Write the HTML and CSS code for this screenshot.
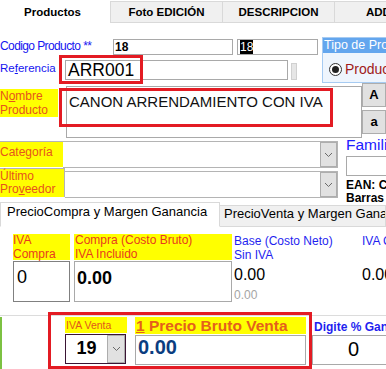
FILE: index.html
```html
<!DOCTYPE html>
<html lang="es">
<head>
<meta charset="utf-8">
<link rel="stylesheet" href="styles.css">
</head>
<body>
<div class="page">
  <div class="tabs">
    <div class="tab active">Productos</div>
    <div class="tab">Foto EDICIÓN</div>
    <div class="tab">DESCRIPCION</div>
    <div class="tab last">ADD</div>
  </div>

  <div class="row-ab">
    <div class="ab-left">
      <div class="row-a">
        <div class="lbl-blue lbl-codigo">Codi<u>g</u>o Producto **</div>
        <div class="inp inp-cod">18</div>
        <div class="inp inp-cod2"><span class="sel">18</span></div>
      </div>
      <div class="row-b">
        <div class="lbl-blue lbl-ref">Re<u>f</u>erencia</div>
        <div class="inp inp-ref">ARR001</div>
        <div class="mini-bar"></div>
      </div>
    </div>
    <div class="group">
      <div class="group-head">Tipo de Producto</div>
      <div class="group-body">
        <span class="radio"><span class="dot"></span></span>
        <span class="radio-text">Producto</span>
      </div>
    </div>
  </div>

  <div class="row-c">
    <div class="ylbl lbl-nombre">N<u>o</u>mbre<br>Producto</div>
    <div class="inp textarea">CANON ARRENDAMIENTO CON IVA</div>
    <div class="btns">
      <div class="btn">A</div>
      <div class="btn">a</div>
    </div>
  </div>

  <div class="row-de">
    <div class="de-left">
      <div class="row-d">
        <div class="ylbl lbl-cat">Cate<u>g</u>oría</div>
        <div class="combo combo-cat">
          <div class="drop"><svg width="9" height="6" viewBox="0 0 9 6"><polyline points="1,1 4.5,4.5 8,1" fill="none" stroke="#6a6a6a" stroke-width="1"/></svg></div>
        </div>
      </div>
      <div class="row-e">
        <div class="ylbl lbl-prov">Último<br>Pro<u>v</u>eedor</div>
        <div class="combo combo-prov">
          <div class="drop"><svg width="9" height="6" viewBox="0 0 9 6"><polyline points="1,1 4.5,4.5 8,1" fill="none" stroke="#6a6a6a" stroke-width="1"/></svg></div>
        </div>
      </div>
    </div>
    <div class="de-right">
      <div class="familia">Familia</div>
      <div class="inp inp-fam"></div>
      <div class="ean">EAN: Codigo<br>Barras</div>
    </div>
  </div>

  <div class="tabs2">
    <div class="tab2 active">PrecioCompra y Margen Ganancia</div>
    <div class="tab2">PrecioVenta y Margen Ganancia</div>
  </div>

  <div class="panel">
    <div class="col col1">
      <div class="ylbl lbl-red lbl-ivac">IVA<br>Compra</div>
      <div class="inp box-ivac">0</div>
    </div>
    <div class="col col2">
      <div class="ylbl lbl-red lbl-compra">Compra (Costo Bruto)<br>IVA Incluido</div>
      <div class="inp box-compra">0.00</div>
    </div>
    <div class="col col3">
      <div class="blue-txt">Base (Costo Neto)<br>Sin IVA</div>
      <div class="val">0.00</div>
      <div class="val-gray">0.00</div>
    </div>
    <div class="col col4">
      <div class="blue-txt">IVA Compra<br>&nbsp;</div>
      <div class="val">0.00</div>
    </div>
  </div>

  <div class="bottom">
    <div class="bcol bcol-iva">
      <div class="ylbl lbl-ivav">IVA Venta</div>
      <div class="combo-iva">
        <div class="iva-val">19</div>
        <div class="drop drop-iva"><svg width="9" height="6" viewBox="0 0 9 6"><polyline points="1,1 4.5,4.5 8,1" fill="none" stroke="#6a6a6a" stroke-width="1"/></svg></div>
      </div>
    </div>
    <div class="bcol bcol-precio">
      <div class="ylbl lbl-precio"><u>1</u> Precio Bruto Venta</div>
      <div class="inp box-precio">0.00</div>
    </div>
    <div class="bcol bcol-dig">
      <div class="lbl-dig">Digite % Ganancia</div>
      <div class="inp box-dig">0</div>
    </div>
  </div>

  <div class="hl hl-ref"></div>
  <div class="hl hl-nombre"></div>
  <div class="hl hl-bottom"></div>
</div>
</body>
</html>
```

FILE: styles.css
```css
* { box-sizing: border-box; }
html, body { margin: 0; padding: 0; background: #fff; }
.page {
  position: relative;
  width: 386px;
  height: 369px;
  overflow: hidden;
  font-family: "Liberation Sans", Arial, sans-serif;
  font-size: 12px;
  color: #000;
  white-space: nowrap;
}
u { text-decoration: underline; text-underline-offset: 1px; }

/* top tabs */
.tabs { display: flex; height: 23px; }
.tab {
  flex: none;
  width: 112px;
  height: 22px;
  margin-top: 1px;
  padding-top: 1px;
  border: 1px solid #d9d9d9;
  border-right: none;
  background: #f0f0f0;
  font-weight: bold;
  font-size: 11.5px;
  line-height: 19px;
  text-align: center;
  overflow: hidden;
}
.tab.active {
  width: 110px;
  margin-top: 0;
  padding: 0 6px 0 0;
  border-color: transparent;
  background: #fff;
  line-height: 22px;
}
.tab.last { text-align: left; padding-left: 31px; }

/* rows A & B */
.row-ab { display: flex; height: 47px; margin-top: 14px; }
.ab-left { width: 322px; flex: none; }
.row-a { display: flex; height: 21px; }
.lbl-blue { color: #1515f0; line-height: 14px; }
.lbl-codigo { width: 113px; padding-top: 2px; font-size: 12px; letter-spacing: -0.6px; }
.inp { border: 1px solid #a9a9a9; background: #fff; overflow: hidden; }
.inp-cod {
  width: 120px; height: 16px; margin-top: 2px;
  font-weight: bold; font-size: 12px; line-height: 14px; padding-left: 1px;
}
.inp-cod2 {
  width: 81px; height: 16px; margin-top: 2px; margin-left: 4px;
  font-size: 12px; line-height: 14px; padding-left: 2px;
}
.sel { background: #000; color: #fff; }
.row-b { display: flex; height: 26px; }
.lbl-ref { width: 65px; padding-top: 3px; font-size: 11.5px; }
.inp-ref {
  width: 223px; height: 20px; margin-top: 2px;
  font-size: 17.5px; line-height: 19px; padding-left: 2px;
}
.mini-bar {
  width: 6px; height: 17px; margin-top: 5px; margin-left: 3px;
  background: #e6e6e6; border: 1px solid #d0d0d0;
}
.group {
  width: 64px; height: 46px; flex: none;
  border: 1px solid #a6cbf2; border-right: none;
  background: #eef5fd;
  overflow: hidden;
}
.group-head {
  height: 15px; background: #63a6ee; color: #fff;
  font-size: 12.5px; line-height: 15px; padding-left: 1px;
}
.group-body { display: flex; align-items: center; padding: 8px 0 0 6px; }
.radio {
  width: 13px; height: 13px; border-radius: 50%;
  border: 1px solid #333; background: #fff;
  display: flex; align-items: center; justify-content: center; flex: none;
}
.dot { width: 7px; height: 7px; border-radius: 50%; background: #222; }
.radio-text { color: #a01a1a; font-size: 14px; margin-left: 3px; line-height: 16px; }

/* row C */
.row-c { display: flex; height: 56px; }
.ylbl { background: #ffff00; color: #e6541c; flex: none; }
.lbl-nombre { width: 58px; height: 28px; margin-top: 5px; line-height: 14px; }
.textarea {
  width: 300px; height: 52px; margin-left: 8px; margin-top: 2px;
  font-size: 15px; line-height: 18px; padding: 6px 0 0 2px;
  color: #111;
}
.btns { display: flex; flex-direction: column; gap: 3px; margin-top: -1px; }
.btn {
  width: 24px; height: 24px;
  background: #e1e1e1; border: 1px solid #adadad;
  font-weight: bold; font-size: 13px; line-height: 22px; text-align: center;
}

/* rows D & E */
.row-de { display: flex; height: 60px; margin-top: 1px; }
.de-left { width: 338px; flex: none; }
.row-d { display: flex; height: 27px; }
.lbl-cat {
  width: 63px; height: 26px; border-top: 1px solid #b4b4b4;
  padding-top: 3px; line-height: 14px;
}
.combo {
  position: relative;
  border: 1px solid #b4b4b4; border-left: none; background: #fff;
  display: flex; justify-content: flex-end;
}
.combo-cat { width: 275px; height: 27px; }
.drop {
  width: 17px; height: 100%;
  background: #e1e1e1; border: 1px solid #adadad;
  display: flex; align-items: center; justify-content: center;
}
.row-e { display: flex; height: 31px; }
.lbl-prov {
  width: 65px; height: 29px;
  border-top: 1px solid #b4b4b4; border-right: 1px solid #b4b4b4;
  line-height: 13px; padding-top: 1px;
}
.combo-prov { width: 273px; height: 27px; margin-top: 3px; }
.de-right { margin-left: 8px; width: 48px; flex: none; }
.familia { color: #2020ff; font-size: 15.5px; line-height: 16px; margin-top: -4px; }
.inp-fam { width: 48px; height: 20px; margin-top: 3px; }
.ean { font-weight: bold; font-size: 12px; line-height: 13px; margin-top: 3px; }

/* tabs 2 */
.tabs2 { display: flex; height: 25px; margin-top: 1px; border-bottom: 1px solid #d9d9d9; }
.tab2 {
  flex: none;
  width: 166px; height: 22px; margin-top: 3px;
  background: #f0f0f0; border: 1px solid #d9d9d9; border-left: none;
  font-size: 13px; line-height: 16px; padding: 0 0 0 4px;
  overflow: hidden;
}
.tab2.active {
  width: 220px; height: 25px; margin-top: 0;
  background: #fff; border: 1px solid #d9d9d9; border-bottom: 1px solid #fff;
  padding: 1px 0 0 6px;
}

/* panel */
.panel { display: flex; height: 89px; padding: 7px 0 0 13px; border-bottom: 1px solid #dcdcdc; }
.col { flex: none; }
.col1 { width: 57px; }
.lbl-red { color: #e83a1e; line-height: 13.5px; }
.lbl-ivac { height: 26px; }
.box-ivac { height: 41px; margin-top: 1px; font-size: 18px; line-height: 22px; padding: 4px 0 0 3px; border-color: #808080; }
.col2 { width: 158px; margin-left: 4px; }
.lbl-compra { height: 26px; padding-left: 1px; }
.box-compra { height: 41px; margin-top: 1px; font-size: 18px; font-weight: bold; line-height: 22px; padding: 5px 0 0 2px; }
.col3 { width: 129px; margin-left: 1px; padding-left: 1px; }
.blue-txt { color: #1f1ff0; line-height: 14px; height: 28px; }
.val { font-size: 16px; line-height: 18px; margin-top: 4px; }
.val-gray { color: #a5a5a5; font-size: 12px; line-height: 14px; margin-top: 4px; }
.col4 { width: 40px; }

/* bottom */
.bottom { display: flex; height: 52px; border-left: 2px solid #7cc142; margin-top: 1px; }
.bcol { flex: none; }
.bcol-iva { width: 62px; margin-left: 63px; }
.lbl-ivav { height: 16px; font-size: 10.5px; line-height: 16px; padding-left: 1px; color: #e2561c; }
.combo-iva {
  display: flex; width: 61px; height: 30px; margin-top: 1px;
  border: 1px solid #3a1434; background: #fff;
}
.iva-val { flex: 1; text-align: center; font-weight: bold; font-size: 18px; line-height: 26px; }
.drop-iva { width: 18px; height: 28px; }
.bcol-precio { width: 171px; margin-left: 8px; }
.lbl-precio {
  height: 17px; font-weight: bold; font-size: 15.5px; line-height: 17px;
  padding-left: 1px; color: #e4601c;
}
.box-precio {
  height: 30px; margin-top: 1px;
  font-weight: bold; font-size: 20px; line-height: 22px; padding-left: 2px;
  color: #0b3d80;
}
.bcol-dig { width: 83px; margin-left: 6px; }
.lbl-dig {
  height: 18px; color: #1f1ff0; font-weight: bold; font-size: 12px;
  line-height: 16px; padding: 2px 0 0 2px;
}
.box-dig { height: 30px; font-size: 20px; line-height: 26px; text-align: center; }

/* red highlight overlays */
.hl { position: absolute; border: 3px solid #e31b23; pointer-events: none; }
.hl-ref { left: 59px; top: 55px; width: 84px; height: 29px; }
.hl-nombre { left: 59px; top: 88px; width: 274px; height: 39px; }
.hl-bottom { left: 48px; top: 312px; width: 264px; height: 57px; }
```
